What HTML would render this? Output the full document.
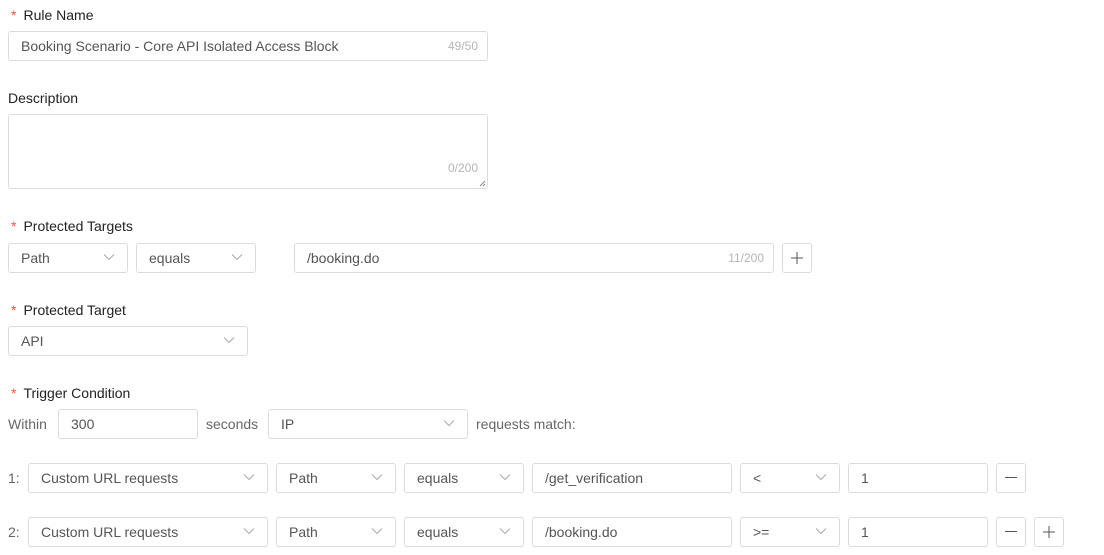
<!DOCTYPE html>
<html><head><meta charset="utf-8"><style>
*{box-sizing:border-box;margin:0;padding:0}
body{width:1104px;height:555px;background:#fff;font-family:"Liberation Sans",sans-serif;font-size:14px;color:#333;position:relative;overflow:hidden}
.a{position:absolute}
.lbl{position:absolute;left:8px;line-height:20px;color:#222}
.star{color:#f5533d;margin-right:7px;margin-left:3px}
.box{position:absolute;height:30px;border:1px solid #dcdcdc;border-radius:3px;background:#fff;color:#555;line-height:28px;padding-left:12px}
.cnt{position:absolute;right:9px;top:0;font-size:12px;color:#b5b5b5}
.chev{position:absolute;right:12px;top:9px;width:12px;height:8px}
.txt{position:absolute;line-height:20px;color:#666}
.btn{position:absolute;width:30px;height:30px;border:1px solid #dcdcdc;border-radius:3px}
.btn svg{position:absolute;left:7px;top:7px}
</style></head><body>
<svg width="0" height="0" style="position:absolute"><defs>
<symbol id="c" viewBox="0 0 12 8"><path d="M1 1.5L6 6.5L11 1.5" fill="none" stroke="#aaa" stroke-width="1"/></symbol>
<symbol id="p" viewBox="0 0 14 14"><path d="M7 1V13M1 7H13" stroke="#555" stroke-width="1"/></symbol>
<symbol id="m" viewBox="0 0 14 14"><path d="M1 6.5H13" stroke="#555" stroke-width="1"/></symbol>
</defs></svg>

<div class="lbl" style="top:5px"><span class="star">*</span>Rule Name</div>
<div class="box" style="left:8px;top:31px;width:480px">Booking Scenario - Core API Isolated Access Block<span class="cnt">49/50</span></div>

<div class="lbl" style="top:88px">Description</div>
<div class="box" style="left:8px;top:114px;width:480px;height:75px"><span class="cnt" style="top:39px">0/200</span>
<svg class="a" style="right:1px;bottom:1px" width="7" height="7"><path d="M1 6L6 1M4 6L6 4" stroke="#888" stroke-width="1"/></svg></div>

<div class="lbl" style="top:216px"><span class="star">*</span>Protected Targets</div>
<div class="box" style="left:8px;top:243px;width:120px">Path<svg class="chev"><use href="#c"/></svg></div>
<div class="box" style="left:136px;top:243px;width:120px">equals<svg class="chev"><use href="#c"/></svg></div>
<div class="box" style="left:294px;top:243px;width:480px">/booking.do<span class="cnt">11/200</span></div>
<div class="btn" style="left:782px;top:243px"><svg width="14" height="14"><use href="#p"/></svg></div>

<div class="lbl" style="top:300px"><span class="star">*</span>Protected Target</div>
<div class="box" style="left:8px;top:326px;width:240px">API<svg class="chev"><use href="#c"/></svg></div>

<div class="lbl" style="top:383px"><span class="star">*</span>Trigger Condition</div>
<div class="txt" style="left:8px;top:414px">Within</div>
<div class="box" style="left:58px;top:409px;width:140px">300</div>
<div class="txt" style="left:206px;top:414px">seconds</div>
<div class="box" style="left:268px;top:409px;width:200px">IP<svg class="chev"><use href="#c"/></svg></div>
<div class="txt" style="left:476px;top:414px">requests match:</div>

<div class="txt" style="left:8px;top:468px">1:</div>
<div class="box" style="left:28px;top:463px;width:240px">Custom URL requests<svg class="chev"><use href="#c"/></svg></div>
<div class="box" style="left:276px;top:463px;width:120px">Path<svg class="chev"><use href="#c"/></svg></div>
<div class="box" style="left:404px;top:463px;width:120px">equals<svg class="chev"><use href="#c"/></svg></div>
<div class="box" style="left:532px;top:463px;width:200px">/get_verification</div>
<div class="box" style="left:740px;top:463px;width:100px">&lt;<svg class="chev"><use href="#c"/></svg></div>
<div class="box" style="left:848px;top:463px;width:140px">1</div>
<div class="btn" style="left:996px;top:463px"><svg width="14" height="14"><use href="#m"/></svg></div>

<div class="txt" style="left:8px;top:522px">2:</div>
<div class="box" style="left:28px;top:517px;width:240px">Custom URL requests<svg class="chev"><use href="#c"/></svg></div>
<div class="box" style="left:276px;top:517px;width:120px">Path<svg class="chev"><use href="#c"/></svg></div>
<div class="box" style="left:404px;top:517px;width:120px">equals<svg class="chev"><use href="#c"/></svg></div>
<div class="box" style="left:532px;top:517px;width:200px">/booking.do</div>
<div class="box" style="left:740px;top:517px;width:100px">&gt;=<svg class="chev"><use href="#c"/></svg></div>
<div class="box" style="left:848px;top:517px;width:140px">1</div>
<div class="btn" style="left:996px;top:517px"><svg width="14" height="14"><use href="#m"/></svg></div>
<div class="btn" style="left:1034px;top:517px"><svg width="14" height="14"><use href="#p"/></svg></div>
</body></html>
